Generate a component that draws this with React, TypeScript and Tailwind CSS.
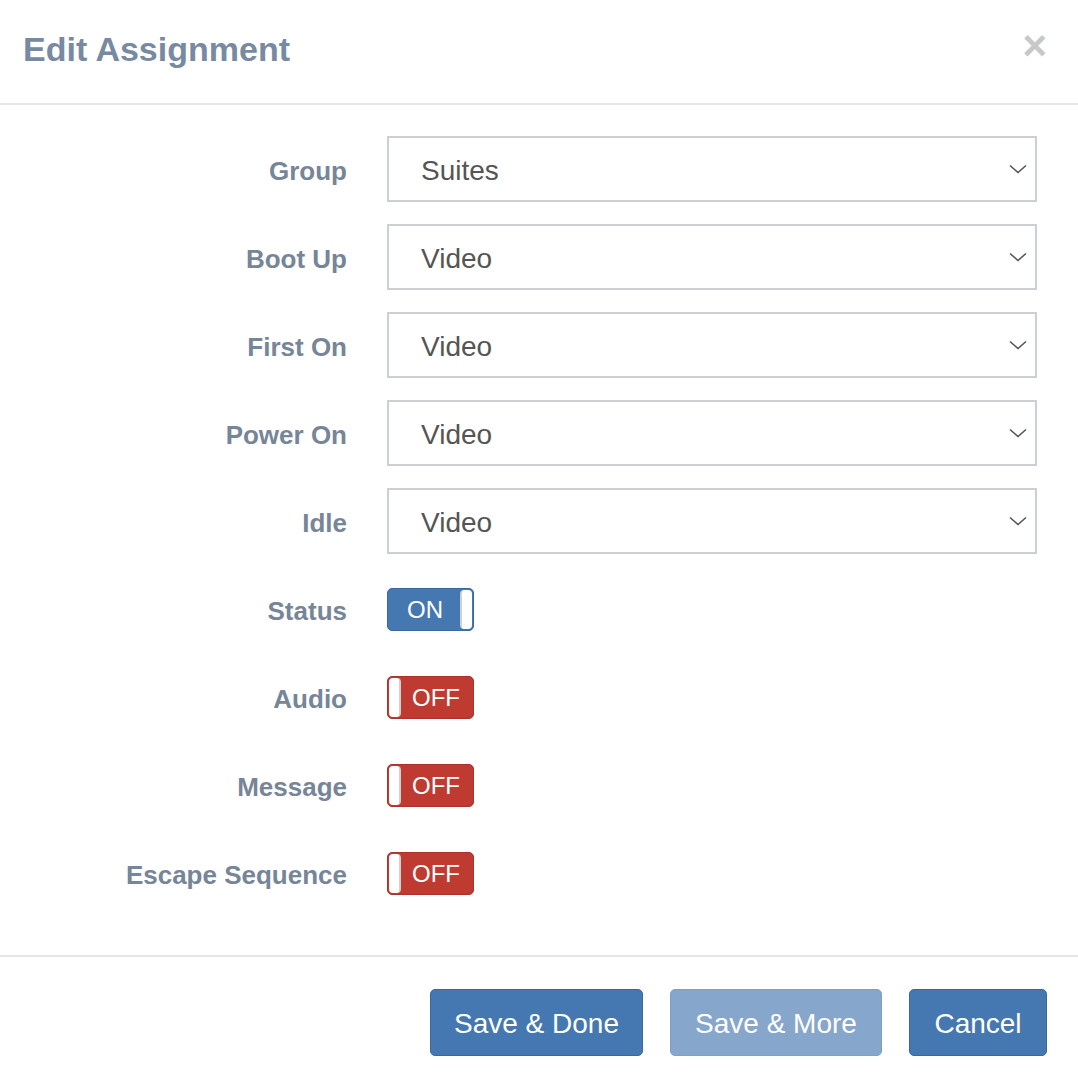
import React from "react";

const font = { fontFamily: '"Liberation Sans", Arial, Helvetica, sans-serif' };

function Chevron() {
  return (
    <svg width="18" height="10" viewBox="0 0 18 10" className="shrink-0">
      <path d="M1 1.5 L9 8.5 L17 1.5" fill="none" stroke="#555" strokeWidth="1.6" />
    </svg>
  );
}

function Select({ value }: { value: string }) {
  return (
    <div className="flex-1 h-[66px] border-2 border-[#ccd0d6] bg-white flex items-center justify-between pl-[32px] pr-[8px]">
      <span className="text-[28px] text-[#555555] leading-none pt-[3px]">{value}</span>
      <Chevron />
    </div>
  );
}

function Toggle({ on }: { on: boolean }) {
  if (on) {
    return (
      <div className="w-[87px] h-[43px] rounded-[5px] bg-[#4577b1] border border-[#3a69a0] flex items-center justify-between pl-[19px] pr-[1px]">
        <span className="text-[24px] text-white leading-none pt-[2px]">ON</span>
        <div className="w-[12px] h-[39px] rounded-[4px] bg-white border-l-2 border-[#d0d0d0]" />
      </div>
    );
  }
  return (
    <div className="w-[87px] h-[43px] rounded-[5px] bg-[#bf3b31] border border-[#a8332a] flex items-center pl-[1px] pr-[13px] justify-between">
      <div className="w-[12px] h-[39px] rounded-[4px] bg-white border-r-2 border-[#d0d0d0]" />
      <span className="text-[24px] text-white leading-none pt-[2px]">OFF</span>
    </div>
  );
}

function Row({ label, children }: { label: string; children: React.ReactNode }) {
  return (
    <div className="flex items-center h-[66px]">
      <div className="w-[347px] shrink-0 text-right font-bold text-[26px] text-[#778599] leading-none pt-[3px]">{label}</div>
      <div className="ml-[40px] flex-1 flex items-center">{children}</div>
    </div>
  );
}

export default function App() {
  return (
    <div className="w-[1078px] h-[1080px] bg-white overflow-hidden" style={font}>
      <div className="h-[105px] border-b-2 border-[#e5e5e5] flex items-center justify-between pl-[23px] pr-[31px]">
        <h1 className="text-[34px] font-bold text-[#788aa1] leading-none -mt-[5px]">Edit Assignment</h1>
        <span className="text-[42px] font-bold text-[#c8c8c8] leading-none -mt-[12px]">×</span>
      </div>
      <div className="pt-[31px] pb-[49px] pr-[41px] flex flex-col gap-[22px] border-b-2 border-[#e5e5e5]">
        <Row label="Group"><Select value="Suites" /></Row>
        <Row label="Boot Up"><Select value="Video" /></Row>
        <Row label="First On"><Select value="Video" /></Row>
        <Row label="Power On"><Select value="Video" /></Row>
        <Row label="Idle"><Select value="Video" /></Row>
        <Row label="Status"><Toggle on /></Row>
        <Row label="Audio"><Toggle on={false} /></Row>
        <Row label="Message"><Toggle on={false} /></Row>
        <Row label="Escape Sequence"><Toggle on={false} /></Row>
      </div>
      <div className="flex justify-end pt-[32px] pr-[31px] gap-[27px]">
        <button className="w-[213px] h-[67px] rounded-[5px] bg-[#4577b1] border border-[#3a69a0] text-white text-[28px] leading-none pt-[2px]">Save &amp; Done</button>
        <button className="w-[212px] h-[67px] rounded-[5px] bg-[#87a6cb] border border-[#7f9fc6] text-white text-[28px] leading-none pt-[2px]">Save &amp; More</button>
        <button className="w-[138px] h-[67px] rounded-[5px] bg-[#4577b1] border border-[#3a69a0] text-white text-[28px] leading-none pt-[2px]">Cancel</button>
      </div>
    </div>
  );
}
